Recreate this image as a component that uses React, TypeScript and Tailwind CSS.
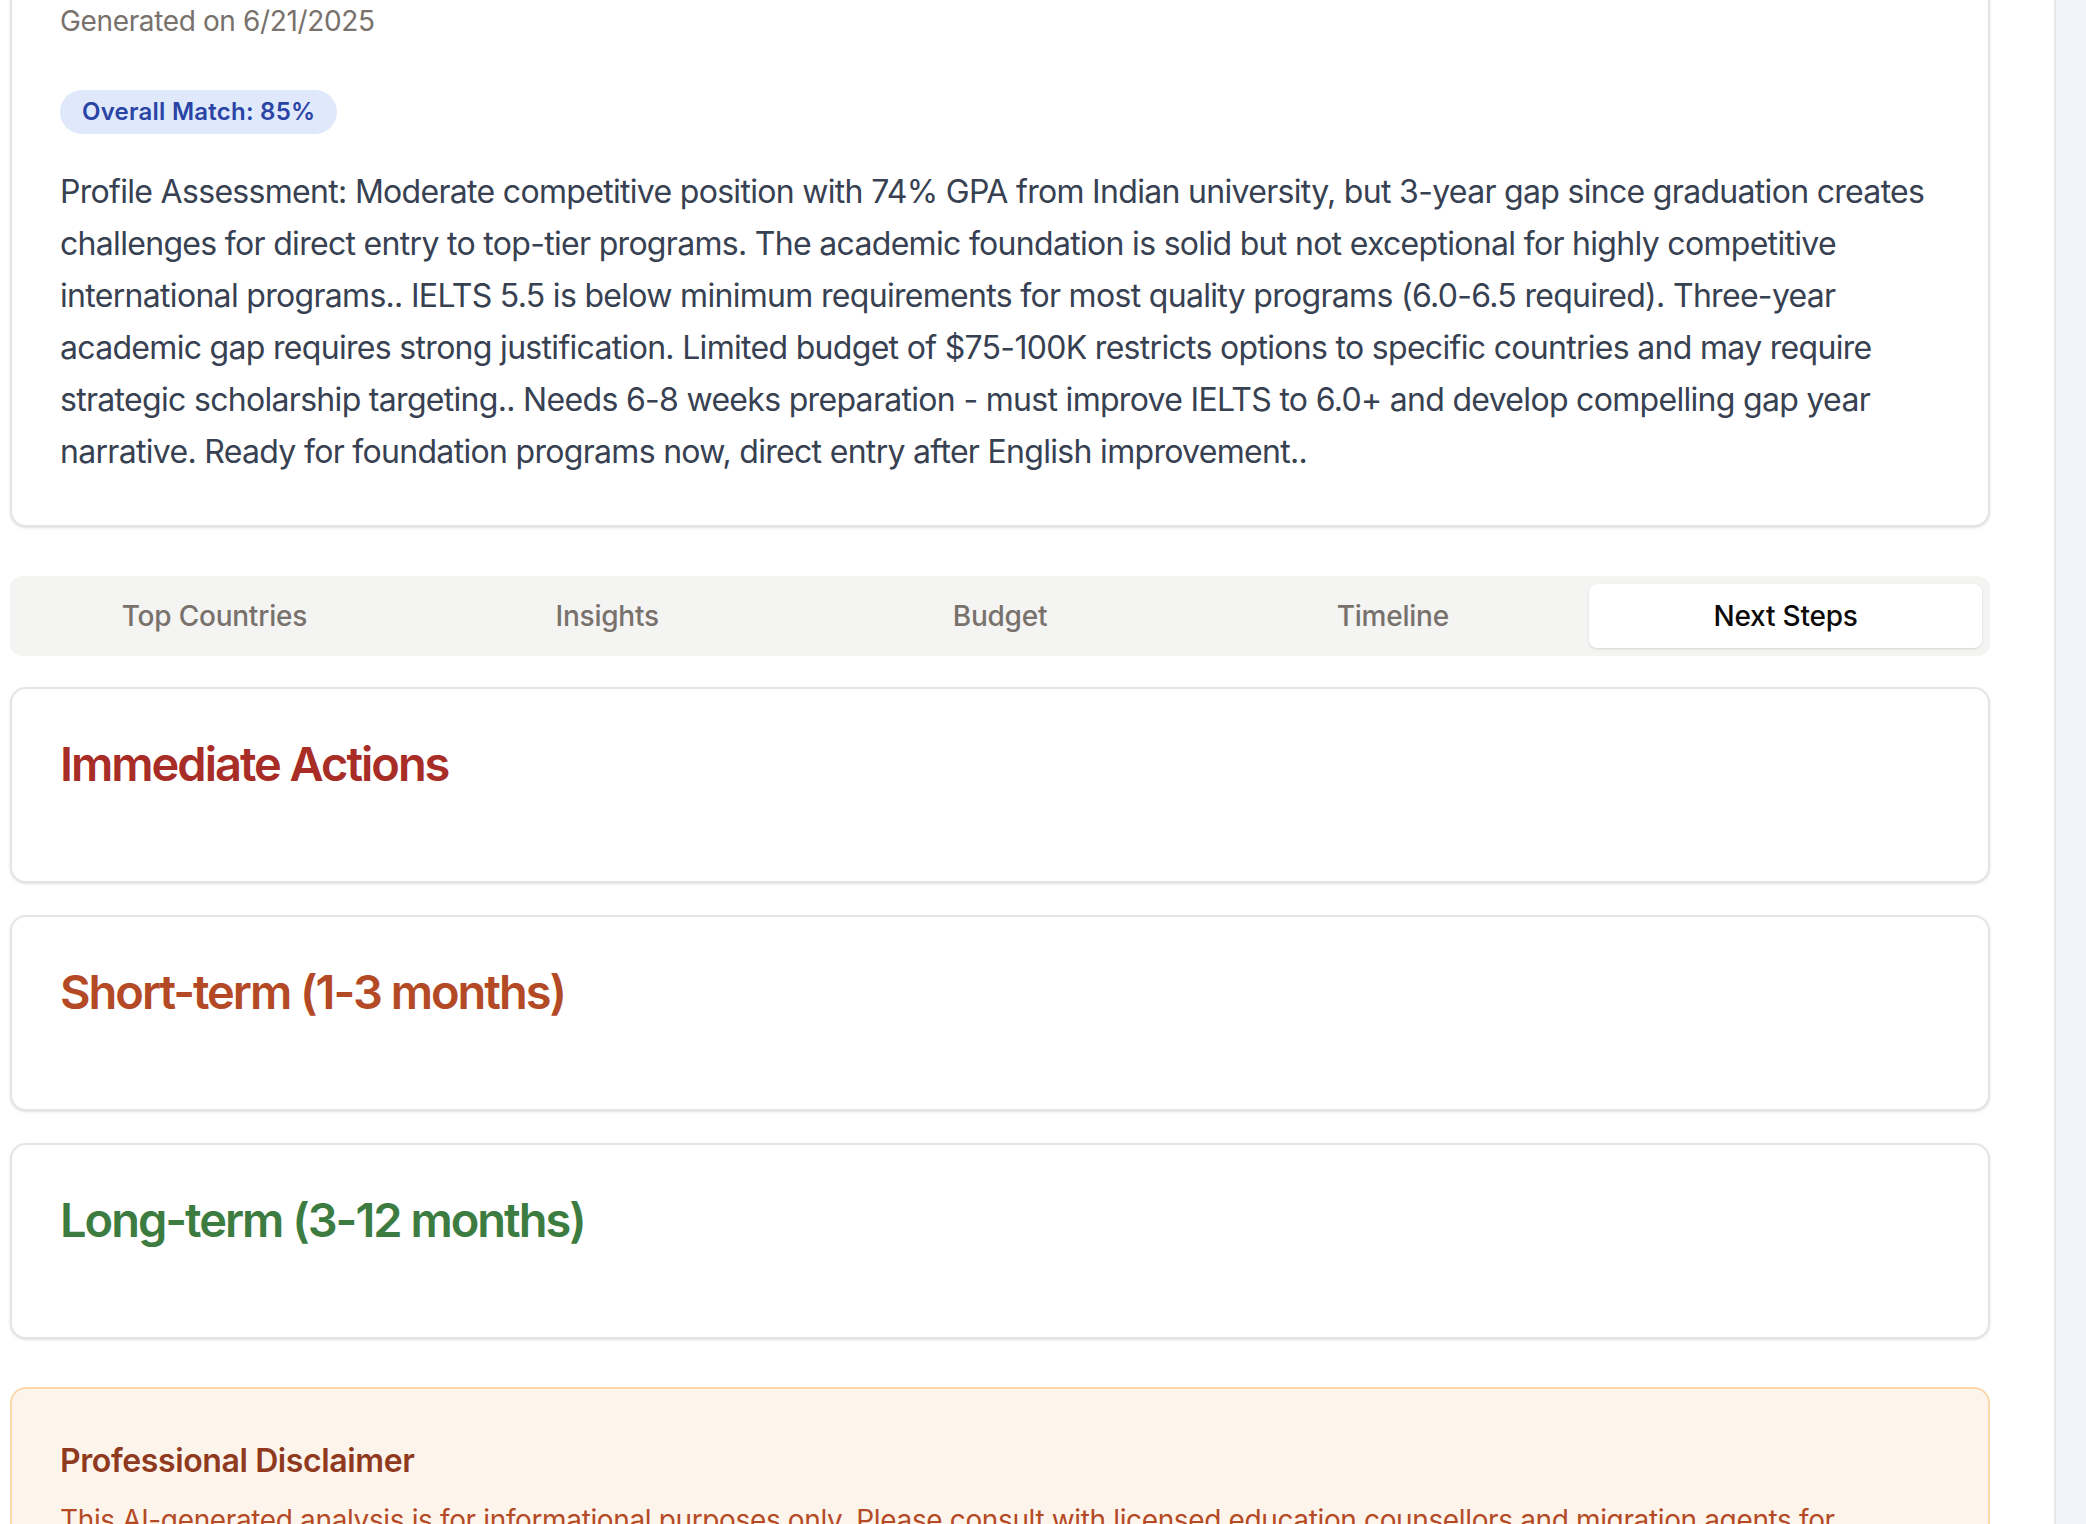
import React from 'react';

const tabs = ['Top Countries', 'Insights', 'Budget', 'Timeline', 'Next Steps'];

const steps = [
  { title: 'Immediate Actions', color: 'text-[#a82d27]' },
  { title: 'Short-term (1-3 months)', color: 'text-[#b34a25]' },
  { title: 'Long-term (3-12 months)', color: 'text-[#3d7c41]' },
];

const assessment =
  'Profile Assessment: Moderate competitive position with 74% GPA from Indian university, but 3-year gap since graduation creates challenges for direct entry to top-tier programs. The academic foundation is solid but not exceptional for highly competitive international programs.. IELTS 5.5 is below minimum requirements for most quality programs (6.0-6.5 required). Three-year academic gap requires strong justification. Limited budget of $75-100K restricts options to specific countries and may require strategic scholarship targeting.. Needs 6-8 weeks preparation - must improve IELTS to 6.0+ and develop compelling gap year narrative. Ready for foundation programs now, direct entry after English improvement..';

function StepCard({ title, color }: { title: string; color: string }) {
  return (
    <div className="rounded-[16px] border-2 border-[#e7e5e4] bg-white shadow-sm">
      <div className="px-[48px] pt-[51px] pb-[46px]">
        <h3 className={`text-[47px] font-semibold leading-none tracking-[-0.043em] ${color}`}>{title}</h3>
      </div>
      <div className="px-[48px] pb-[48px]">
        <ul className="space-y-4"></ul>
      </div>
    </div>
  );
}

export default function App() {
  return (
    <div className="flex min-h-screen overflow-hidden bg-white font-['Inter',sans-serif]">
      <main className="w-[2056px] shrink-0 border-r-2 border-[#e5e7eb] bg-white pl-[10px]">
        <div className="w-[1980px]">
          {/* summary card, scrolled partly out of view */}
          <div className="-mt-[49px] rounded-[16px] border-2 border-[#e7e5e4] bg-white px-[48px] pt-[48px] pb-[47px] shadow-sm">
            <p className="text-[28px] leading-[40px] tracking-[-0.013em] text-[#78716c]">Generated on 6/21/2025</p>
            <div className="mt-[49px]">
              <span className="inline-flex items-center rounded-full bg-[#dfe9fb] px-[22px] py-[6px] text-[24px] font-semibold leading-[32px] tracking-[0.01em] text-[#2a44a6]">
                Overall Match: 85%
              </span>
            </div>
            <p className="mt-[32px] text-[32px] leading-[52px] tracking-[-0.0216em] text-[#374151]">{assessment}</p>
          </div>

          <div className="mt-[49px] grid grid-cols-5 rounded-[12px] bg-[#f4f4f3] p-[8px]">
            {tabs.map((t) => (
              <button
                key={t}
                className={
                  t === 'Next Steps'
                    ? 'rounded-[8px] bg-white py-[12px] text-[28px] font-medium leading-[40px] tracking-[-0.008em] text-[#0c0a09] shadow-sm'
                    : 'rounded-[8px] py-[12px] text-[28px] font-medium leading-[40px] tracking-[-0.008em] text-[#78716c]'
                }
              >
                {t}
              </button>
            ))}
          </div>

          <div className="mt-[31px] space-y-[32px]">
            {steps.map((s) => (
              <StepCard key={s.title} title={s.title} color={s.color} />
            ))}
          </div>

          <div className="mt-[48px] rounded-[16px] border-2 border-[#fbd7a9] bg-[#fdf5ec] p-[48px]">
            <h4 className="text-[32px] font-semibold leading-[48px] tracking-[-0.012em] text-[#8f3a1f]">Professional Disclaimer</h4>
            <p className="mt-[15px] text-[28px] leading-[40px] tracking-[-0.013em] text-[#b54a26]">
              This AI-generated analysis is for informational purposes only. Please consult with licensed education counsellors and migration agents for
              personalized guidance specific to your situation before making any application or visa decisions.
            </p>
          </div>
        </div>
      </main>
      <aside className="flex-1 bg-[#f0f3f8]" />
    </div>
  );
}
